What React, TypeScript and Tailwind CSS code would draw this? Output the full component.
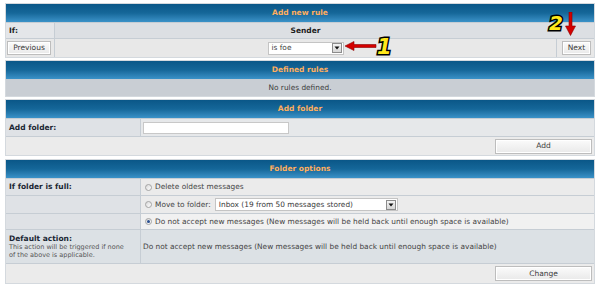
import React from "react";

const Header = ({ children }: { children: React.ReactNode }) => (
  <div className="h-[18px] flex items-center justify-center bg-gradient-to-b from-[#0a5788] via-[#156799] to-[#3a92c8] text-[#ffae5e] font-bold text-[7.5px]">
    {children}
  </div>
);

const Btn = ({ label, className = "" }: { label: string; className?: string }) => (
  <button
    className={
      "h-[14px] border border-[#bdbdbd] bg-gradient-to-b from-[#fbfbfb] to-[#e9e9e9] shadow-[inset_0_0_0_1px_#ffffff] flex items-center justify-center text-[7.5px] text-[#3a3a3a] " +
      className
    }
  >
    {label}
  </button>
);

const Radio = ({ checked = false }: { checked?: boolean }) => (
  <span className="w-[7px] h-[7px] rounded-full border border-[#a4a4a4] bg-gradient-to-br from-[#d8d8d8] to-white flex items-center justify-center shrink-0">
    {checked && <span className="w-[3px] h-[3px] rounded-full bg-[#2a4f8f]" />}
  </span>
);

const SelectBox = ({ text, className = "" }: { text: string; className?: string }) => (
  <div className={"h-[13px] bg-white border border-[#c4c4c4] flex items-center justify-between pl-[3px] pr-px " + className}>
    <span className="text-[7.4px] text-[#3a3a3a] whitespace-nowrap">{text}</span>
    <span className="w-[10px] h-[10px] border border-[#8c8c8c] bg-gradient-to-b from-[#f4f4f4] to-[#d6d6d6] flex items-center justify-center">
      <svg width="6" height="4" viewBox="0 0 6 4">
        <polygon points="0.5,0.5 5.5,0.5 3,3.5" fill="#111" />
      </svg>
    </span>
  </div>
);

export default function App() {
  return (
    <div className="relative w-[600px] h-[303px] bg-white pt-[3px] px-[5px] flex flex-col gap-[2px] font-['DejaVu_Sans',Verdana,sans-serif] text-[#444] overflow-hidden">
      {/* Panel 1 */}
      <div className="border border-[#d4d9de] bg-[#c6cdd4] flex flex-col gap-px">
        <Header>Add new rule</Header>
        <div className="h-[15px] grid grid-cols-[48px_1fr] gap-px">
          <div className="bg-[#e4e6e9] flex items-center pl-[3px] font-bold text-[7.5px] text-[#1d1d1d]">If:</div>
          <div className="bg-[#dcdfe3] flex items-center justify-center pr-[38px] font-bold text-[7.5px] text-[#1d1d1d]">Sender</div>
        </div>
        <div className="h-[18px] grid grid-cols-[48px_1fr_37px] gap-px">
          <div className="bg-[#e8e8e8] flex items-center pl-px">
            <Btn label="Previous" className="w-[44px]" />
          </div>
          <div className="bg-[#e8e8e8] flex items-center justify-center">
            <SelectBox text="is foe" className="w-[76px]" />
          </div>
          <div className="bg-[#e8e8e8] flex items-center justify-start pl-[5px]">
            <Btn label="Next" className="w-[29px]" />
          </div>
        </div>
      </div>

      {/* Panel 2 */}
      <div className="border border-[#d4d9de] bg-[#c6cdd4] flex flex-col gap-px">
        <Header>Defined rules</Header>
        <div className="h-[16px] bg-[#c9ced4] flex items-center justify-center text-[7.4px] text-[#3d3d3d]">
          No rules defined.
        </div>
      </div>

      {/* Panel 3 */}
      <div className="border border-[#d4d9de] bg-[#c6cdd4] flex flex-col gap-px">
        <Header>Add folder</Header>
        <div className="h-[17px] grid grid-cols-[134px_1fr] gap-px">
          <div className="bg-[#dfe2e6] flex items-center pl-[3px] font-bold text-[7.5px] text-[#1a2633]">Add folder:</div>
          <div className="bg-[#e6e8ea] flex items-center pl-[2px]">
            <div className="w-[146px] h-[12px] bg-white border border-[#c8c8c8]" />
          </div>
        </div>
        <div className="h-[18px] bg-[#ebebeb] flex items-center justify-end pr-[2px]">
          <Btn label="Add" className="w-[97px] h-[15px]" />
        </div>
      </div>

      {/* Panel 4 */}
      <div className="border border-[#d4d9de] bg-[#c6cdd4] flex flex-col gap-px mt-px">
        <Header>Folder options</Header>
        <div className="h-[16px] grid grid-cols-[134px_1fr] gap-px">
          <div className="bg-[#dfe2e6] flex items-center pl-[3px] font-bold text-[7.5px] text-[#1a2633]">If folder is full:</div>
          <div className="bg-[#ebebeb] flex items-center gap-[3px] pl-[4px] text-[7.4px]">
            <Radio />
            <span>Delete oldest messages</span>
          </div>
        </div>
        <div className="h-[17px] grid grid-cols-[134px_1fr] gap-px">
          <div className="bg-[#dfe2e6]" />
          <div className="bg-[#ebebeb] flex items-center gap-[3px] pl-[4px] text-[7.4px]">
            <Radio />
            <span>Move to folder:</span>
            <SelectBox text="Inbox (19 from 50 messages stored)" className="w-[183px] ml-px" />
          </div>
        </div>
        <div className="h-[15px] grid grid-cols-[134px_1fr] gap-px">
          <div className="bg-[#dfe2e6]" />
          <div className="bg-[#f1f1f1] flex items-center gap-[3px] pl-[4px] text-[7.4px]">
            <Radio checked />
            <span>Do not accept new messages (New messages will be held back until enough space is available)</span>
          </div>
        </div>
        <div className="h-[33px] grid grid-cols-[134px_1fr] gap-px">
          <div className="bg-[#dce1e5] flex flex-col justify-center pl-[3px]">
            <span className="font-bold text-[7.5px] text-[#1a2633] leading-[9px]">Default action:</span>
            <span className="text-[6.5px] text-[#555] leading-[8px] whitespace-nowrap">
              This action will be triggered if none
              <br />
              of the above is applicable.
            </span>
          </div>
          <div className="bg-[#dce1e5] flex items-center pl-[2px] text-[7.4px]">
            Do not accept new messages (New messages will be held back until enough space is available)
          </div>
        </div>
        <div className="h-[19px] bg-[#ebebeb] flex items-center justify-end pr-[2px]">
          <Btn label="Change" className="w-[97px] h-[15px]" />
        </div>
      </div>

      {/* Annotations */}
      <svg className="absolute left-[345px] top-[41px]" width="32" height="10" viewBox="0 0 32 10">
        <polygon points="0,5 9,0.5 9,3.5 31,3.5 31,6.5 9,6.5 9,9.5" fill="#d40000" stroke="#8a0000" strokeWidth="0.6" />
      </svg>
      <span className="absolute left-[377px] top-[37px] text-[21px] leading-none font-bold italic text-[#ffe81a] [-webkit-text-stroke:3px_#000] [paint-order:stroke_fill]">
        1
      </span>
      <svg className="absolute left-[565px] top-[12px]" width="11" height="24" viewBox="0 0 11 24">
        <polygon points="4,0 7,0 7,14 10.5,14 5.5,23.5 0.5,14 4,14" fill="#d40000" stroke="#8a0000" strokeWidth="0.6" />
      </svg>
      <span className="absolute left-[549px] top-[13px] text-[20px] leading-none font-bold italic text-[#ffe81a] [-webkit-text-stroke:3px_#000] [paint-order:stroke_fill]">
        2
      </span>
    </div>
  );
}
